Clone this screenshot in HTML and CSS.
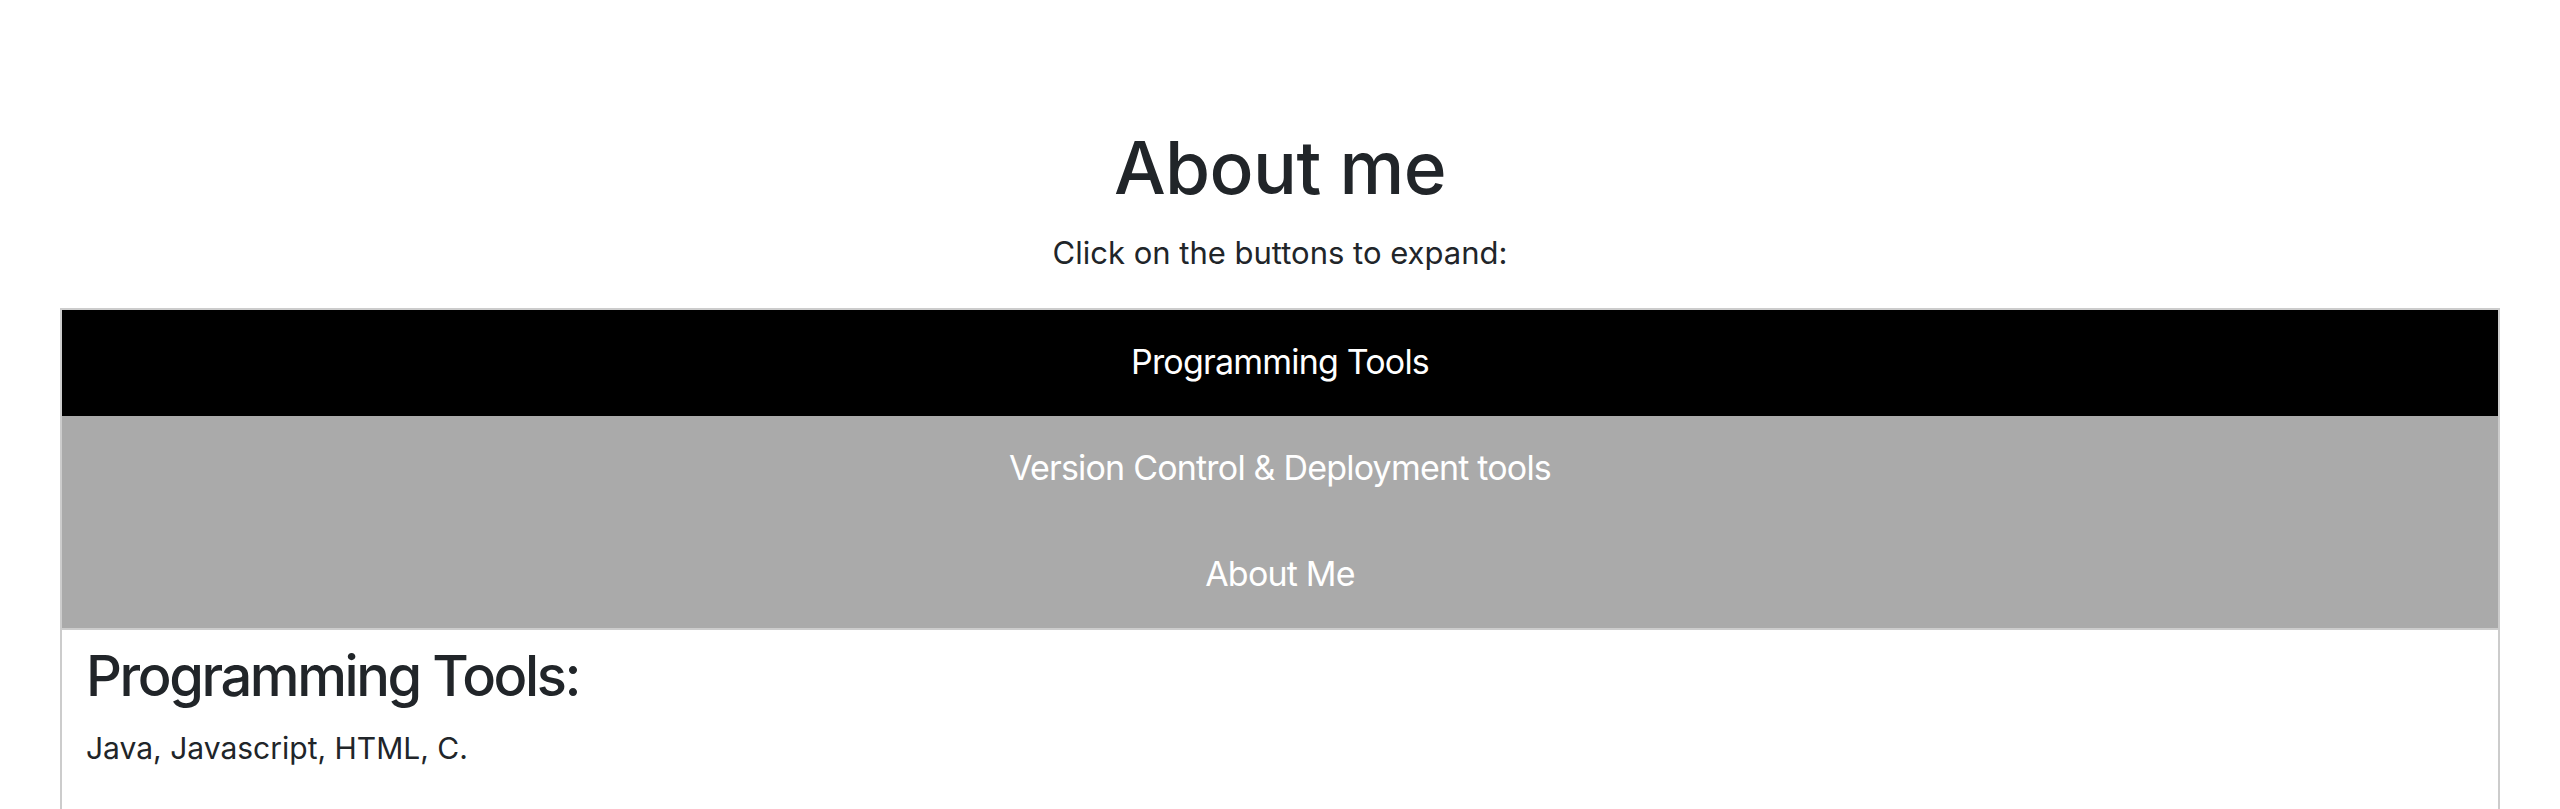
FILE: index.html
```html
<!DOCTYPE html>
<html lang="en">
<head>
<meta charset="utf-8">
<title>About me</title>
<link rel="stylesheet" href="styles.css">
</head>
<body>
<main class="page">
  <h1 class="title">About me</h1>
  <p class="intro">Click on the buttons to expand:</p>
  <section class="accordion">
    <div class="tabs">
      <button class="tab tab-active">Programming Tools</button>
      <button class="tab">Version Control &amp; Deployment tools</button>
      <button class="tab">About Me</button>
    </div>
    <div class="tab-content">
      <h2 class="content-title">Programming Tools:</h2>
      <p class="content-text">Java, Javascript, HTML, C.</p>
    </div>
  </section>
</main>
</body>
</html>
```
FILE: styles.css
```css
html, body {
  margin: 0;
  padding: 0;
  background: #fff;
}
body {
  font-family: Inter, "Noto Sans", "Liberation Sans", sans-serif;
  color: #212529;
}
.page {
  padding: 124px 60px 0;
}
.title {
  margin: 0 0 18px;
  text-align: center;
  font-size: 73px;
  font-weight: 550;
  line-height: 88px;
  letter-spacing: -0.6px;
}
.intro {
  margin: 0 0 32px;
  text-align: center;
  font-size: 31px;
  line-height: 46px;
}
.accordion {
  border: 2px solid #ccc;
  border-bottom: none;
  min-height: 600px;
}
.tabs {
  display: flex;
  flex-direction: column;
  border-bottom: 2px solid #ccc;
}
.tab {
  display: block;
  width: 100%;
  border: none;
  margin: 0;
  padding: 27px 32px 29px;
  background: #aaa;
  color: #fff;
  font-family: inherit;
  font-size: 34px;
  line-height: 50px;
  letter-spacing: -0.8px;
  text-align: center;
}
.tab-active {
  background: #000;
}
.tab-content {
  padding: 12px 24px 0;
}
.content-title {
  margin: 0 0 16px;
  font-size: 56px;
  font-weight: 550;
  line-height: 68px;
  letter-spacing: -2.4px;
}
.content-text {
  margin: 0;
  font-size: 30px;
  line-height: 45px;
}
```
